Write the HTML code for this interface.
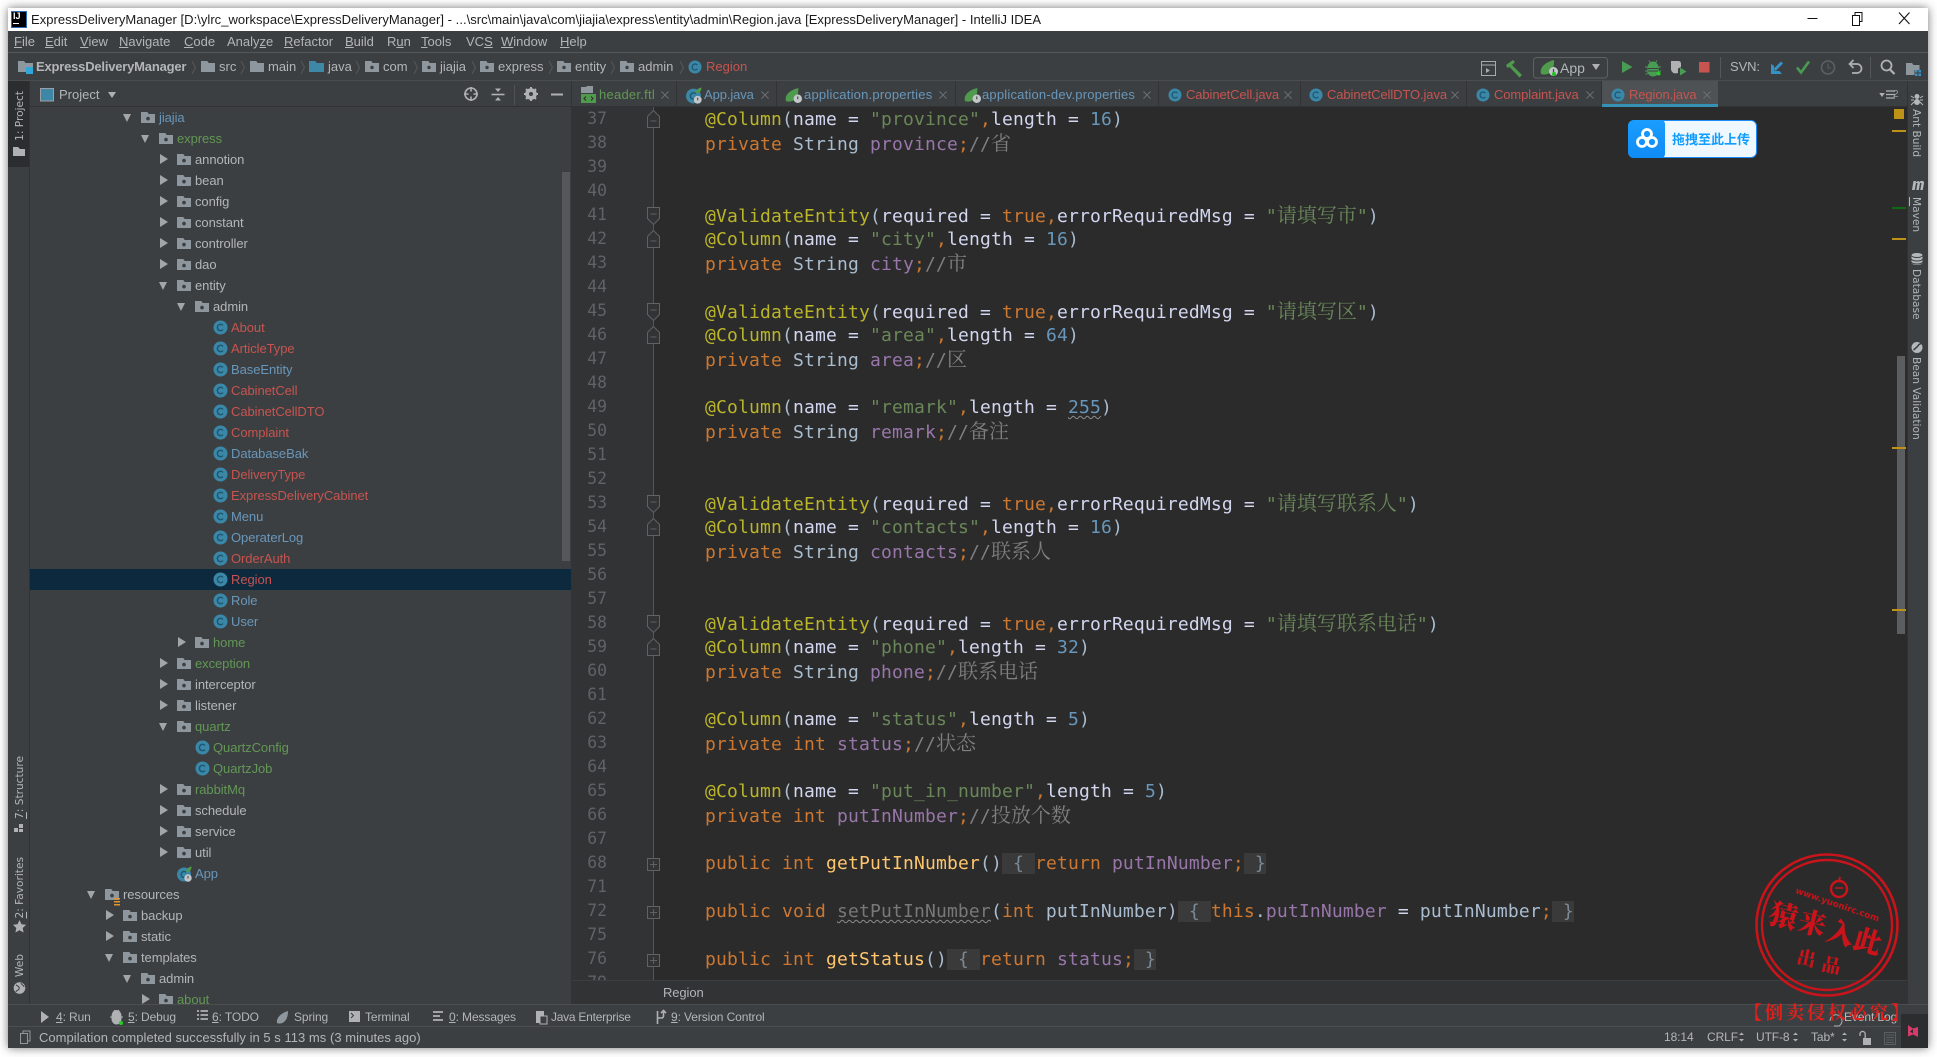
<!DOCTYPE html>
<html lang="zh">
<head>
<meta charset="utf-8">
<title>ExpressDeliveryManager - IntelliJ IDEA</title>
<style>
html,body{margin:0;padding:0;width:1937px;height:1057px;overflow:hidden;background:#fff}
body{position:relative;font-family:"Liberation Sans","Noto Sans CJK SC",sans-serif;font-size:13px;color:#b3b6b9;filter:blur(.3px)}
.w{position:absolute;left:8px;top:8px;width:1920px;height:1040px;background:#3c3f41;box-shadow:0 0 9px rgba(0,0,0,.55)}
.p{position:absolute;white-space:nowrap}
.t{position:absolute;white-space:nowrap;line-height:20px;height:20px}
.box{position:absolute}
u{text-decoration:underline}
/* tree */
#tree{position:absolute;left:30px;top:107px;width:541px;height:897px;overflow:hidden;color:#b3b6b9;letter-spacing:-.07px}
.r{position:relative;height:21px;line-height:21px;padding-left:calc(129px + var(--l)*18px);white-space:nowrap}
.r.sel{background:#0d293e}
.cl::before,.op::before{content:"";position:absolute;width:0;height:0}
.cl::before{left:calc(94px + var(--l)*18px);top:5px;border-left:8px solid #a3a6a9;border-top:5px solid transparent;border-bottom:5px solid transparent}
.op::before{left:calc(93px + var(--l)*18px);top:7px;border-top:8px solid #a3a6a9;border-left:4.5px solid transparent;border-right:4.5px solid transparent}
.fd::after{content:"";position:absolute;left:calc(111px + var(--l)*18px);top:5px;width:14px;height:11px;background:radial-gradient(circle at 50% 60%,#3c3f41 1.5px,#8f979e 2.2px);clip-path:polygon(0 0,45% 0,55% 18%,100% 18%,100% 100%,0 100%)}
.r svg{position:absolute;left:calc(111px + var(--l)*18px);top:3px}
.e{color:#c75450}.b{color:#6897bb}.g{color:#629755}
/* tabs */
.tb{position:absolute;top:85px;line-height:20px;white-space:nowrap;letter-spacing:-.1px}
.sep{position:absolute;top:81px;width:1px;height:26px;background:#323232}
/* code */
#gutter{position:absolute;left:572px;top:107px;width:81px;height:873px;background:#313335;overflow:hidden}
#nums{position:absolute;left:572px;top:107px;width:35px;height:873px;overflow:hidden;text-align:right;font:16.4px/24px "DejaVu Sans Mono",monospace;color:#606366}
#nums div{height:24px}
#code{position:absolute;left:705px;top:108px;width:1190px;height:872px;overflow:hidden;font:18px/24px "DejaVu Sans Mono",monospace;letter-spacing:.16px;color:#a9bcd0}
#code div{height:24px;line-height:24px;white-space:pre}
.an{color:#bbb529}.k{color:#cc7832}.s{color:#6a8759}.n{color:#6897bb}.f{color:#9876aa}.m{color:#d2d6ef}.c{color:#808080}.o{color:#d2d6ef}
.z{font-family:"Noto Serif CJK SC",serif;font-size:20px;letter-spacing:0;line-height:20px}
.ph{background:#3a3a3a;color:#7a8a96}
.wv{text-decoration:underline wavy #8d8d8d 1px;text-underline-offset:2px}
/* stripes */
.vr{position:absolute;writing-mode:vertical-rl;white-space:nowrap;font-family:"DejaVu Sans",sans-serif;font-size:10.6px;color:#b3b6b9;line-height:14px}
.vl{transform:rotate(180deg)}
.bt{position:absolute;top:1007px;line-height:20px;font-size:12px;white-space:nowrap;color:#b3b6b9;letter-spacing:-.1px}
</style>
</head>
<body>
<div class="w"></div>

<!-- title bar -->
<div class="box" style="left:8px;top:8px;width:1920px;height:23px;background:#fff"></div>
<div class="box" style="left:11px;top:11px;width:14px;height:15px;background:#000;border:1px solid #2a6fb5"></div>
<div class="p" style="left:13px;top:11px;font-size:9px;font-weight:bold;color:#fff;line-height:11px">IJ</div>
<div class="box" style="left:13px;top:23px;width:6px;height:1px;background:#fff"></div>
<div class="p" style="left:31px;top:10px;line-height:20px;color:#1a1a1a;font-size:13px;letter-spacing:.03px">ExpressDeliveryManager [D:\ylrc_workspace\ExpressDeliveryManager] - ...\src\main\java\com\jiajia\express\entity\admin\Region.java [ExpressDeliveryManager] - IntelliJ IDEA</div>

<!-- menu -->
<div class="box" style="left:8px;top:52px;width:1920px;height:1px;background:#555759"></div>
<div class="t" style="left:14px;top:32px"><u>F</u>ile</div>
<div class="t" style="left:45px;top:32px"><u>E</u>dit</div>
<div class="t" style="left:80px;top:32px"><u>V</u>iew</div>
<div class="t" style="left:119px;top:32px"><u>N</u>avigate</div>
<div class="t" style="left:184px;top:32px"><u>C</u>ode</div>
<div class="t" style="left:227px;top:32px">Analy<u>z</u>e</div>
<div class="t" style="left:284px;top:32px"><u>R</u>efactor</div>
<div class="t" style="left:345px;top:32px"><u>B</u>uild</div>
<div class="t" style="left:387px;top:32px">R<u>u</u>n</div>
<div class="t" style="left:421px;top:32px"><u>T</u>ools</div>
<div class="t" style="left:466px;top:32px">VC<u>S</u></div>
<div class="t" style="left:501px;top:32px"><u>W</u>indow</div>
<div class="t" style="left:560px;top:32px"><u>H</u>elp</div>

<!-- nav bar -->
<div class="box" style="left:8px;top:80px;width:1920px;height:1px;background:#4a4c4e"></div>
<div class="t" style="left:36px;top:57px;font-weight:bold;letter-spacing:-.2px">ExpressDeliveryManager</div>
<div class="t" style="left:219px;top:57px">src</div>
<div class="t" style="left:268px;top:57px">main</div>
<div class="t" style="left:328px;top:57px">java</div>
<div class="t" style="left:383px;top:57px">com</div>
<div class="t" style="left:440px;top:57px">jiajia</div>
<div class="t" style="left:498px;top:57px">express</div>
<div class="t" style="left:575px;top:57px">entity</div>
<div class="t" style="left:638px;top:57px">admin</div>
<div class="t e" style="left:706px;top:57px">Region</div>
<div class="t" style="left:1560px;top:58px;font-size:14px">App</div>
<div class="t" style="left:1730px;top:57px;letter-spacing:-.1px">SVN:</div>

<!-- left stripe -->
<div class="box" style="left:29px;top:81px;width:1px;height:923px;background:#323232"></div>
<div class="box" style="left:8px;top:81px;width:21px;height:86px;background:#2b2d2f"></div>
<div class="vr vl" style="left:13px;top:91px">1: Project</div>
<div class="vr vl" style="left:13px;top:756px"><u>7</u>: Structure</div>
<div class="vr vl" style="left:13px;top:857px"><u>2</u>: Favorites</div>
<div class="vr vl" style="left:13px;top:954px">Web</div>

<!-- project header -->
<div class="box" style="left:30px;top:106px;width:541px;height:1px;background:#323232"></div>
<div class="t" style="left:59px;top:85px">Project</div>

<!-- tree -->
<div id="tree">
<div class="r op fd b" style="--l:0">jiajia</div>
<div class="r op fd g" style="--l:1">express</div>
<div class="r cl fd" style="--l:2">annotion</div>
<div class="r cl fd" style="--l:2">bean</div>
<div class="r cl fd" style="--l:2">config</div>
<div class="r cl fd" style="--l:2">constant</div>
<div class="r cl fd" style="--l:2">controller</div>
<div class="r cl fd" style="--l:2">dao</div>
<div class="r op fd" style="--l:2">entity</div>
<div class="r op fd" style="--l:3">admin</div>
<div class="r e" style="--l:4"><svg width="15" height="15"><use href="#ci"/></svg>About</div>
<div class="r e" style="--l:4"><svg width="15" height="15"><use href="#ci"/></svg>ArticleType</div>
<div class="r b" style="--l:4"><svg width="15" height="15"><use href="#ci"/></svg>BaseEntity</div>
<div class="r e" style="--l:4"><svg width="15" height="15"><use href="#ci"/></svg>CabinetCell</div>
<div class="r e" style="--l:4"><svg width="15" height="15"><use href="#ci"/></svg>CabinetCellDTO</div>
<div class="r e" style="--l:4"><svg width="15" height="15"><use href="#ci"/></svg>Complaint</div>
<div class="r b" style="--l:4"><svg width="15" height="15"><use href="#ci"/></svg>DatabaseBak</div>
<div class="r e" style="--l:4"><svg width="15" height="15"><use href="#ci"/></svg>DeliveryType</div>
<div class="r e" style="--l:4"><svg width="15" height="15"><use href="#ci"/></svg>ExpressDeliveryCabinet</div>
<div class="r b" style="--l:4"><svg width="15" height="15"><use href="#ci"/></svg>Menu</div>
<div class="r b" style="--l:4"><svg width="15" height="15"><use href="#ci"/></svg>OperaterLog</div>
<div class="r e" style="--l:4"><svg width="15" height="15"><use href="#ci"/></svg>OrderAuth</div>
<div class="r e sel" style="--l:4"><svg width="15" height="15"><use href="#ci"/></svg>Region</div>
<div class="r b" style="--l:4"><svg width="15" height="15"><use href="#ci"/></svg>Role</div>
<div class="r b" style="--l:4"><svg width="15" height="15"><use href="#ci"/></svg>User</div>
<div class="r cl fd g" style="--l:3">home</div>
<div class="r cl fd g" style="--l:2">exception</div>
<div class="r cl fd" style="--l:2">interceptor</div>
<div class="r cl fd" style="--l:2">listener</div>
<div class="r op fd g" style="--l:2">quartz</div>
<div class="r g" style="--l:3"><svg width="15" height="15"><use href="#ci"/></svg>QuartzConfig</div>
<div class="r g" style="--l:3"><svg width="15" height="15"><use href="#ci"/></svg>QuartzJob</div>
<div class="r cl fd g" style="--l:2">rabbitMq</div>
<div class="r cl fd" style="--l:2">schedule</div>
<div class="r cl fd" style="--l:2">service</div>
<div class="r cl fd" style="--l:2">util</div>
<div class="r b" style="--l:2"><svg width="15" height="16"><use href="#sp"/></svg>App</div>
<div class="r op fd" style="--l:-2">resources</div>
<div class="r cl fd" style="--l:-1">backup</div>
<div class="r cl fd" style="--l:-1">static</div>
<div class="r op fd" style="--l:-1">templates</div>
<div class="r op fd" style="--l:0">admin</div>
<div class="r cl fd g" style="--l:1">about</div>
</div>
<div class="box" style="left:562px;top:172px;width:8px;height:389px;background:#55585a"></div>

<!-- tabs -->
<div class="box" style="left:571px;top:81px;width:1336px;height:26px;background:#3c3f41"></div>
<div class="box" style="left:571px;top:81px;width:1px;height:923px;background:#323232"></div>
<div class="box" style="left:572px;top:106px;width:1335px;height:1px;background:#323232"></div>
<div class="box" style="left:1602px;top:81px;width:116px;height:23px;background:#4e5254"></div>
<div class="box" style="left:1602px;top:104px;width:116px;height:3px;background:#3592b5"></div>
<div class="sep" style="left:676px"></div><div class="sep" style="left:776px"></div><div class="sep" style="left:955px"></div><div class="sep" style="left:1158px"></div><div class="sep" style="left:1300px"></div><div class="sep" style="left:1466px"></div><div class="sep" style="left:1601px"></div>
<div class="tb g" style="left:599px;letter-spacing:.25px">header.ftl</div>
<div class="tb b" style="left:704px">App.java</div>
<div class="tb b" style="left:804px;letter-spacing:.22px">application.properties</div>
<div class="tb b" style="left:982px;letter-spacing:.2px">application-dev.properties</div>
<div class="tb e" style="left:1186px">CabinetCell.java</div>
<div class="tb e" style="left:1327px">CabinetCellDTO.java</div>
<div class="tb e" style="left:1494px">Complaint.java</div>
<div class="tb e" style="left:1629px">Region.java</div>
<div class="p" style="left:1893px;top:86px;font-size:10px;line-height:18px;color:#9aa0a5">2</div>

<!-- editor -->
<div class="box" style="left:572px;top:107px;width:1335px;height:873px;background:#2b2b2b"></div>
<div id="gutter"></div>
<div class="box" style="left:653px;top:107px;width:1px;height:873px;background:#555"></div>
<div id="nums">
<div>37</div><div>38</div><div>39</div><div>40</div><div>41</div><div>42</div><div>43</div><div>44</div><div>45</div><div>46</div><div>47</div><div>48</div><div>49</div><div>50</div><div>51</div><div>52</div><div>53</div><div>54</div><div>55</div><div>56</div><div>57</div><div>58</div><div>59</div><div>60</div><div>61</div><div>62</div><div>63</div><div>64</div><div>65</div><div>66</div><div>67</div><div>68</div><div>71</div><div>72</div><div>75</div><div>76</div><div>79</div>
</div>
<div id="code">
<div><span class="an">@Column</span>(<span class="m">name</span> <span class="o">=</span> <span class="s">"province"</span><span class="k">,</span><span class="m">length</span> <span class="o">=</span> <span class="n">16</span>)</div>
<div><span class="k">private</span> String <span class="f">province</span><span class="k">;</span><span class="c">//<span class="z">省</span></span></div>
<div></div>
<div></div>
<div><span class="an">@ValidateEntity</span>(<span class="m">required</span> <span class="o">=</span> <span class="k">true,</span><span class="m">errorRequiredMsg</span> <span class="o">=</span> <span class="s">"<span class="z">请填写市</span>"</span>)</div>
<div><span class="an">@Column</span>(<span class="m">name</span> <span class="o">=</span> <span class="s">"city"</span><span class="k">,</span><span class="m">length</span> <span class="o">=</span> <span class="n">16</span>)</div>
<div><span class="k">private</span> String <span class="f">city</span><span class="k">;</span><span class="c">//<span class="z">市</span></span></div>
<div></div>
<div><span class="an">@ValidateEntity</span>(<span class="m">required</span> <span class="o">=</span> <span class="k">true,</span><span class="m">errorRequiredMsg</span> <span class="o">=</span> <span class="s">"<span class="z">请填写区</span>"</span>)</div>
<div><span class="an">@Column</span>(<span class="m">name</span> <span class="o">=</span> <span class="s">"area"</span><span class="k">,</span><span class="m">length</span> <span class="o">=</span> <span class="n">64</span>)</div>
<div><span class="k">private</span> String <span class="f">area</span><span class="k">;</span><span class="c">//<span class="z">区</span></span></div>
<div></div>
<div><span class="an">@Column</span>(<span class="m">name</span> <span class="o">=</span> <span class="s">"remark"</span><span class="k">,</span><span class="m">length</span> <span class="o">=</span> <span class="n wv">255</span>)</div>
<div><span class="k">private</span> String <span class="f">remark</span><span class="k">;</span><span class="c">//<span class="z">备注</span></span></div>
<div></div>
<div></div>
<div><span class="an">@ValidateEntity</span>(<span class="m">required</span> <span class="o">=</span> <span class="k">true,</span><span class="m">errorRequiredMsg</span> <span class="o">=</span> <span class="s">"<span class="z">请填写联系人</span>"</span>)</div>
<div><span class="an">@Column</span>(<span class="m">name</span> <span class="o">=</span> <span class="s">"contacts"</span><span class="k">,</span><span class="m">length</span> <span class="o">=</span> <span class="n">16</span>)</div>
<div><span class="k">private</span> String <span class="f">contacts</span><span class="k">;</span><span class="c">//<span class="z">联系人</span></span></div>
<div></div>
<div></div>
<div><span class="an">@ValidateEntity</span>(<span class="m">required</span> <span class="o">=</span> <span class="k">true,</span><span class="m">errorRequiredMsg</span> <span class="o">=</span> <span class="s">"<span class="z">请填写联系电话</span>"</span>)</div>
<div><span class="an">@Column</span>(<span class="m">name</span> <span class="o">=</span> <span class="s">"phone"</span><span class="k">,</span><span class="m">length</span> <span class="o">=</span> <span class="n">32</span>)</div>
<div><span class="k">private</span> String <span class="f">phone</span><span class="k">;</span><span class="c">//<span class="z">联系电话</span></span></div>
<div></div>
<div><span class="an">@Column</span>(<span class="m">name</span> <span class="o">=</span> <span class="s">"status"</span><span class="k">,</span><span class="m">length</span> <span class="o">=</span> <span class="n">5</span>)</div>
<div><span class="k">private int</span> <span class="f">status</span><span class="k">;</span><span class="c">//<span class="z">状态</span></span></div>
<div></div>
<div><span class="an">@Column</span>(<span class="m">name</span> <span class="o">=</span> <span class="s">"put_in_number"</span><span class="k">,</span><span class="m">length</span> <span class="o">=</span> <span class="n">5</span>)</div>
<div><span class="k">private int</span> <span class="f">putInNumber</span><span class="k">;</span><span class="c">//<span class="z">投放个数</span></span></div>
<div></div>
<div><span class="k">public int</span> <span style="color:#ffc66d">getPutInNumber</span>()<span class="ph"> { </span><span class="k">return</span> <span class="f">putInNumber</span><span class="k">;</span><span class="ph"> }</span></div>
<div></div>
<div><span class="k">public void</span> <span class="wv" style="color:#787878">setPutInNumber</span>(<span class="k">int</span> putInNumber)<span class="ph"> { </span><span class="k">this</span>.<span class="f">putInNumber</span> <span class="o">=</span> putInNumber<span class="k">;</span><span class="ph"> }</span></div>
<div></div>
<div><span class="k">public int</span> <span style="color:#ffc66d">getStatus</span>()<span class="ph"> { </span><span class="k">return</span> <span class="f">status</span><span class="k">;</span><span class="ph"> }</span></div>
</div>

<!-- baidu widget -->
<div class="box" style="left:1628px;top:120px;width:129px;height:38px;background:#f0f8ff;border-radius:6px;border:1px solid #1b8bf5;box-sizing:border-box"></div>
<div class="box" style="left:1628px;top:120px;width:37px;height:38px;background:linear-gradient(#1a9dff,#0f8bf5);border-radius:6px 4px 4px 6px"></div>
<div class="p" style="left:1672px;top:129px;font-size:13px;line-height:20px;font-weight:bold;color:#0f9dff;font-family:'Noto Sans CJK SC',sans-serif">拖拽至此上传</div>

<!-- right stripe -->
<div class="box" style="left:1907px;top:81px;width:21px;height:923px;background:#3c3f41;border-left:1px solid #323232;box-sizing:border-box"></div>
<div class="box" style="left:1897px;top:356px;width:8px;height:278px;background:#5b5d5f"></div>
<div class="box" style="left:1894px;top:109px;width:10px;height:10px;background:#be9117"></div>
<div class="box" style="left:1892px;top:130px;width:14px;height:2px;background:#be9117"></div>
<div class="box" style="left:1892px;top:207px;width:14px;height:2px;background:#0a6b14"></div>
<div class="box" style="left:1892px;top:238px;width:14px;height:2px;background:#be9117"></div>
<div class="box" style="left:1892px;top:447px;width:14px;height:2px;background:#be9117"></div>
<div class="box" style="left:1892px;top:609px;width:14px;height:2px;background:#be9117"></div>
<div class="vr" style="left:1909px;top:109px">Ant Build</div>
<div class="vr" style="left:1909px;top:197px"><u>M</u>aven</div>
<div class="vr" style="left:1909px;top:269px">Database</div>
<div class="vr" style="left:1909px;top:357px">Bean Validation</div>

<!-- editor breadcrumb -->
<div class="box" style="left:572px;top:980px;width:1335px;height:24px;background:#313335;border-top:1px solid #3c3e40;box-sizing:border-box"></div>
<div class="t" style="left:663px;top:983px;letter-spacing:-.1px">Region</div>

<!-- bottom toolbar -->
<div class="box" style="left:8px;top:1004px;width:1920px;height:1px;background:#4c4e50"></div>
<div class="box" style="left:8px;top:1026px;width:1920px;height:1px;background:#4c4e50"></div>
<div class="bt" style="left:56px"><u>4</u>: Run</div>
<div class="bt" style="left:128px"><u>5</u>: Debug</div>
<div class="bt" style="left:212px"><u>6</u>: TODO</div>
<div class="bt" style="left:294px">Spring</div>
<div class="bt" style="left:365px">Terminal</div>
<div class="bt" style="left:449px"><u>0</u>: Messages</div>
<div class="bt" style="left:551px;letter-spacing:-.25px">Java Enterprise</div>
<div class="bt" style="left:671px"><u>9</u>: Version Control</div>
<div class="t" style="left:39px;top:1028px;letter-spacing:.03px">Compilation completed successfully in 5 s 113 ms (3 minutes ago)</div>
<div class="bt" style="left:1664px;top:1027px">18:14</div>
<div class="bt" style="left:1707px;top:1027px">CRLF</div>
<div class="bt" style="left:1756px;top:1027px">UTF-8</div>
<div class="bt" style="left:1811px;top:1027px">Tab*</div>
<div class="bt" style="left:1844px;color:#bbb">Event Log</div>
<div class="box" style="left:1901px;top:1014px;width:27px;height:34px;background:#2b2d2f"></div>

<!-- icons layer -->
<svg width="1937" height="1057" style="position:absolute;left:0;top:0;pointer-events:none" xmlns="http://www.w3.org/2000/svg">
<defs>
<symbol id="ci" viewBox="0 0 15 15"><circle cx="7.5" cy="7.5" r="7" fill="#3a87a8"/><path d="M10 5.4A3.2 3.2 0 1 0 10 9.6" fill="none" stroke="#1f5570" stroke-width="1.4"/></symbol>
<symbol id="sp" viewBox="0 0 15 16"><circle cx="7" cy="8.5" r="7" fill="#3a87a8"/><path d="M9.2 6.4A3 3 0 1 0 9.2 10.6" fill="none" stroke="#1f5570" stroke-width="1.3"/><path d="M9 5C10 2 12 1 14.5 0.5C14.5 3 13.5 5.5 10.5 6z" fill="#4f9a4c"/><circle cx="11" cy="12" r="3.7" fill="#c4c7ca"/><path d="M11 10v2.5" stroke="#444" stroke-width="1"/></symbol>
<symbol id="lf" viewBox="0 0 19 18"><path d="M1 15C-1 8 6 3 14 1C14.500 8 12 15 5 15.500C3.500 15.500 2 15.500 1 15z" fill="#4f9a4c"/><circle cx="13.500" cy="12.500" r="4.500" fill="#c4c7ca"/><path d="M13.500 10v3" stroke="#444" stroke-width="1.200"/></symbol>
<symbol id="fo" viewBox="0 0 14 11"><path d="M0 0h6.300l1.400 2H14v9H0z" fill="#8f979e"/></symbol>
<symbol id="fd" viewBox="0 0 14 11"><path d="M0 0h6.300l1.400 2H14v9H0z" fill="#8f979e"/><circle cx="7" cy="6.500" r="1.700" fill="#3c3f41"/></symbol>
<symbol id="up" viewBox="0 0 13 18"><path d="M.5 6.500L6.500.5L12.500 6.500V17.500H.5z" fill="#313335" stroke="#606366"/><path d="M3.500 11h6" stroke="#606366"/></symbol>
<symbol id="dn" viewBox="0 0 13 18"><path d="M.5 .5H12.500V11.500L6.500 17.500L.5 11.500z" fill="#313335" stroke="#606366"/><path d="M3.500 7h6" stroke="#606366"/></symbol>
<symbol id="pl" viewBox="0 0 13 13"><path d="M.5 .5h12v12H.5z" fill="#313335" stroke="#606366"/><path d="M3 6.500h7M6.500 3v7" stroke="#606366"/></symbol>
<symbol id="xx" viewBox="0 0 9 9"><path d="M.5 .5L8.500 8.500M8.500 .5L.5 8.500" stroke="#6f7376" stroke-width="1.100"/></symbol>
<symbol id="ar" viewBox="0 0 7 5"><path d="M0 0h7L3.500 5z" fill="#afb1b3"/></symbol>
</defs>

<!-- window buttons -->
<path d="M1807.500 18.500h10" stroke="#111" stroke-width="1"/>
<path d="M1852.500 15.500h7v10h-7zM1855 15.500v-3h7v9h-2.500" fill="none" stroke="#111"/>
<path d="M1899 12.500L1909.500 24M1909.500 12.500L1899 24" stroke="#111" stroke-width="1.100"/>

<!-- nav icons -->
<path d="M18 61h6l1.500 2H33v9H18z" fill="#8f979e"/><rect x="26" y="67" width="7" height="7" fill="#2fa7d9"/>
<path d="M192 61l3.500 6.500L192 74M241 61l3.500 6.500L241 74M301 61l3.500 6.500L301 74M356 61l3.500 6.500L356 74M414 61l3.500 6.500L414 74M472 61l3.500 6.500L472 74M549 61l3.500 6.500L549 74M611 61l3.500 6.500L611 74M680 61l3.500 6.500L680 74" fill="none" stroke="#55585a"/>
<use href="#fo" x="201" y="61" width="14" height="11"/>
<use href="#fo" x="250" y="61" width="14" height="11"/>
<path d="M309 61h6.300l1.400 2H324v9h-15z" fill="#3f87a6"/>
<use href="#fd" x="365" y="61" width="14" height="11"/>
<use href="#fd" x="422" y="61" width="14" height="11"/>
<use href="#fd" x="480" y="61" width="14" height="11"/>
<use href="#fd" x="557" y="61" width="14" height="11"/>
<use href="#fd" x="620" y="61" width="14" height="11"/>
<use href="#ci" x="688" y="60" width="14" height="14"/>

<!-- nav right -->
<path d="M1481.500 61.500h14v14h-14zM1481.500 65h14" fill="none" stroke="#a7aaad"/><path d="M1486 68l4 2.500l-4 2.500z" fill="#a7aaad"/>
<path d="M1506 65l7-5l2 2l-3 3l10 10l-2.500 2.500l-10-10.500l-2 1z" fill="#4f9a4c"/>
<rect x="1533.500" y="57.500" width="74" height="20.500" rx="3" fill="none" stroke="#5e6163"/>
<use href="#lf" x="1540" y="59" width="19" height="18"/><circle cx="1554" cy="74" r="2" fill="#22c322"/>
<path d="M1592 64h8l-4 6z" fill="#afb1b3"/>
<path d="M1622 61l10.500 6l-10.500 6z" fill="#499c54"/>
<path d="M1648 68a5 6 0 0 1 10 0v3a5 5 0 0 1-10 0zM1649 60.500l2 3M1657 60.500l-2 3M1645 67h3M1658 67h3M1645 71h3M1658 71h3M1645.500 74.500l3-2M1660.500 74.500l-3-2" fill="#499c54" stroke="#499c54" stroke-width="1"/><path d="M1648 68.500h10M1648 71h10" stroke="#3c3f41"/><circle cx="1658.500" cy="73.500" r="2" fill="#22d022"/>
<path d="M1671 61h7a2.500 2.500 0 0 1 3 2.500v3.500l-3 1.500v4.500l-3 .5a5 5 0 0 1-4-4z" fill="#afb1b3"/><path d="M1680 67.500l6.500 4l-6.500 4z" fill="#499c54"/>
<rect x="1699" y="62" width="10.500" height="10.500" fill="#c75450"/>
<path d="M1720.500 57v21" stroke="#55585a"/>
<path d="M1782 62.500l-7.500 7.500" stroke="#3592c4" stroke-width="3"/><path d="M1771 64l3 1.800v5.200h5.500l2.500 3h-11z" fill="#3592c4"/>
<path d="M1797 67.500l4 5l8-11" fill="none" stroke="#499c54" stroke-width="2.600"/>
<circle cx="1828" cy="67.500" r="6.500" fill="none" stroke="#5d6062" stroke-width="1.600"/><path d="M1828 63.500v4.500h3" fill="none" stroke="#5d6062"/>
<path d="M1851 64h6a4.500 4.500 0 0 1 0 9h-5" fill="none" stroke="#afb1b3" stroke-width="1.700"/><path d="M1853.500 60l-4 4l4 4" fill="none" stroke="#afb1b3" stroke-width="1.700"/>
<path d="M1870.500 57v21" stroke="#55585a"/>
<circle cx="1886.500" cy="65.500" r="5" fill="none" stroke="#afb1b3" stroke-width="1.800"/><path d="M1890 69.500l4.500 4.500" stroke="#afb1b3" stroke-width="2.200"/>
<path d="M1906 63h6l1.500 2h6v5h-5v5h-8.500z" fill="#8f979e"/><rect x="1915" y="70" width="2.500" height="2.500" fill="#3592c4"/><rect x="1918.500" y="70" width="2.500" height="2.500" fill="#3592c4"/><rect x="1915" y="73.500" width="2.500" height="2.500" fill="#3592c4"/><rect x="1918.500" y="73.500" width="2.500" height="2.500" fill="#3592c4"/>

<!-- project header icons -->
<rect x="40.500" y="88.500" width="13" height="12.500" fill="#3f87a6" stroke="#9aa0a5"/>
<path d="M108 92h8l-4 6z" fill="#afb1b3"/>
<circle cx="471" cy="94" r="6" fill="none" stroke="#afb1b3" stroke-width="1.600"/><path d="M471 87v4.500M471 96.500v4.500M464 94h4.500M473.500 94h4.500" stroke="#afb1b3" stroke-width="1.600"/>
<path d="M491.500 94.500h13" stroke="#afb1b3" stroke-width="1.600"/><path d="M495 88.500h6l-3 3.500zM495 100.500h6l-3-3.500z" fill="#afb1b3"/>
<path d="M514.500 85v20" stroke="#505355"/>
<circle cx="531" cy="94" r="4.300" fill="none" stroke="#afb1b3" stroke-width="3"/><path d="M531 87v14M524 94h14M526 89l10 10M536 89l-10 10" stroke="#afb1b3" stroke-width="2"/><circle cx="531" cy="94" r="2" fill="#3c3f41"/>
<path d="M551 94.500h12" stroke="#afb1b3" stroke-width="2"/>

<!-- left stripe icons -->
<path d="M13 147h5l2 2h5v7H13z" fill="#afb1b3"/>
<path d="M19 824h4v4h-4zM14 828h4v4h-4zM19 829h4v3h-4z" fill="#afb1b3"/>
<path d="M19.500 920l2 4.300l4.600.5l-3.400 3.200l.9 4.500l-4.100-2.300l-4.100 2.300l.9-4.500l-3.400-3.200l4.600-.5z" fill="#afb1b3"/>
<circle cx="19.500" cy="988" r="5.800" fill="#afb1b3"/><path d="M16 985c2 1 4 2 3 4s-3 1-3 3M21 983c0 2 3 2 3 4" fill="none" stroke="#3c3f41"/>

<!-- resources badge -->
<rect x="114" y="898" width="6" height="1.500" fill="#e0962a"/><rect x="114" y="901" width="6" height="1.500" fill="#e0962a"/><rect x="114" y="904" width="6" height="1.500" fill="#e0962a"/>

<!-- tab icons -->
<path d="M581 87h5l1 -1h6v7h-12z" fill="#8f979e"/><rect x="581" y="94" width="15" height="9" fill="#4f9a4c"/><path d="M586 96.500l-2 2l2 2M591 96.500l2 2l-2 2" fill="none" stroke="#2b2b2b"/>
<use href="#sp" x="686" y="87" width="16" height="17"/>
<use href="#lf" x="785" y="87" width="18" height="17"/>
<use href="#lf" x="964" y="87" width="18" height="17"/>
<use href="#ci" x="1168" y="88" width="14" height="14"/>
<use href="#ci" x="1309" y="88" width="14" height="14"/>
<use href="#ci" x="1476" y="88" width="14" height="14"/>
<use href="#ci" x="1611" y="88" width="14" height="14"/>
<use href="#xx" x="661" y="91" width="8" height="8"/>
<use href="#xx" x="761" y="91" width="8" height="8"/>
<use href="#xx" x="939" y="91" width="8" height="8"/>
<use href="#xx" x="1143" y="91" width="8" height="8"/>
<use href="#xx" x="1284" y="91" width="8" height="8"/>
<use href="#xx" x="1451" y="91" width="8" height="8"/>
<use href="#xx" x="1586" y="91" width="8" height="8"/>
<use href="#xx" x="1703" y="91" width="8" height="8"/>
<use href="#ar" x="1879" y="93" width="6" height="4"/>
<path d="M1886 91h9M1886 94.500h9M1886 98h9" stroke="#afb1b3" stroke-width="1.300"/>

<!-- fold markers -->
<use href="#up" x="647" y="110" width="13" height="18"/>
<use href="#dn" x="647" y="207" width="13" height="18"/>
<use href="#up" x="647" y="230" width="13" height="18"/>
<use href="#dn" x="647" y="303" width="13" height="18"/>
<use href="#up" x="647" y="326" width="13" height="18"/>
<use href="#dn" x="647" y="495" width="13" height="18"/>
<use href="#up" x="647" y="518" width="13" height="18"/>
<use href="#dn" x="647" y="615" width="13" height="18"/>
<use href="#up" x="647" y="638" width="13" height="18"/>
<use href="#pl" x="647" y="858" width="13" height="13"/>
<use href="#pl" x="647" y="906" width="13" height="13"/>
<use href="#pl" x="647" y="954" width="13" height="13"/>

<!-- baidu cloud -->
<g fill="none" stroke="#fff" stroke-width="2.800"><circle cx="1647" cy="134" r="4.500"/><circle cx="1642" cy="142" r="4.500"/><circle cx="1652" cy="142" r="4.500"/></g>

<!-- right stripe icons -->
<path d="M1917 94a2.500 2.500 0 0 1 2.500 2.500a2.500 2.500 0 0 1-5 0a2.500 2.500 0 0 1 2.500-2.500zM1917 99a3 3 0 0 1 3 3a3 3 0 0 1-6 0a3 3 0 0 1 3-3z" fill="#b5b8bb"/><path d="M1911 96l3 2M1923 96l-3 2M1911 100h3M1923 100h-3M1911 105l3-3M1923 105l-3-3" stroke="#b5b8bb"/>
<path d="M1912 190l1.500-9h2.500l-.4 2c1-1.800 3-2.500 4-1c1-1.500 4-1.500 4.500 .5l-1.300 7.500h-2.500l1.200-7h-1.500l-1.200 7h-2.500l1.200-7h-1.500l-1.300 7z" fill="#b5b8bb"/>
<ellipse cx="1917" cy="255" rx="5.500" ry="2" fill="#b5b8bb"/><path d="M1911.500 256v7a5.500 2 0 0 0 11 0v-7a5.500 2 0 0 1-11 0z" fill="#b5b8bb"/><path d="M1911.500 259a5.500 2 0 0 0 11 0M1911.500 262a5.500 2 0 0 0 11 0" fill="none" stroke="#3c3f41"/>
<circle cx="1917" cy="347.500" r="5.500" fill="#b5b8bb"/><path d="M1913.500 350l3.500-3l2-2.500l3-1.500" fill="none" stroke="#3c3f41" stroke-width="1.500"/>

<!-- bottom icons -->
<path d="M41 1011l8 6l-8 6z" fill="#afb1b3"/>
<path d="M112 1016a4.500 5.500 0 0 1 9 0v3a4.500 5 0 0 1-9 0zM114 1010l1.500 2.500M119 1010l-1.500 2.500M110 1017h3M120 1017h3" fill="#afb1b3" stroke="#afb1b3"/><circle cx="121" cy="1023" r="2" fill="#22d022"/>
<path d="M197 1011h2M197 1015h2M197 1019h2M200.500 1011h7.500M200.500 1015h7.500M200.500 1019h7.500" stroke="#afb1b3" stroke-width="1.800"/>
<path d="M277 1023c-1-5 4-10 11-12c0 6-2 12-8 12.500c-1 0-2 0-3-.5z" fill="#8f979e"/>
<rect x="349" y="1011" width="11" height="11" fill="#afb1b3"/><path d="M351 1013l2.500 2.500l-2.500 2.500" fill="none" stroke="#3c3f41"/>
<path d="M433 1012h10M433 1016h7M433 1020h10" stroke="#afb1b3" stroke-width="1.800"/>
<rect x="536" y="1011" width="8" height="12" fill="#afb1b3"/><rect x="540" y="1016" width="7" height="8" fill="#3c3f41" stroke="#afb1b3"/>
<path d="M657.500 1011v13M657.500 1018h4a2 2 0 0 0 2-2v-4M661 1013l2.500-2.500l2.500 2.500" fill="none" stroke="#afb1b3" stroke-width="1.600"/>
<path d="M20.500 1033.500h7v10h-7z" fill="none" stroke="#8f979e"/><path d="M23 1033v-2h7v10h-2.500" fill="none" stroke="#8f979e"/>
<path d="M1739 1035l2.500-2.500l2.500 2.500zM1739 1039l2.500 2.500l2.500-2.500zM1793 1035l2.500-2.500l2.500 2.500zM1793 1039l2.500 2.500l2.500-2.500zM1842 1035l2.500-2.500l2.500 2.500zM1842 1039l2.500 2.500l2.500-2.500z" fill="#afb1b3"/>
<rect x="1863" y="1038" width="8" height="7" fill="#afb1b3"/><path d="M1860 1036v-2a2.600 2.600 0 0 1 5.200 0v4" fill="none" stroke="#afb1b3" stroke-width="1.300"/>
<path d="M1884.500 1032.500h11v12h-11zM1886 1035h8M1886 1037.500h8M1886 1040h8M1886 1042.500h8" fill="none" stroke="#5c5f61"/>
<path d="M1908 1025l5 3.500l5-1.500v10l-5-2.500l-5 2z" fill="#d83a6a"/><path d="M1913 1029l-3 2.500l3 2z" fill="#2b2d2f"/>
<path d="M1830 1021a6 6 0 1 1 9 5h-5" fill="none" stroke="#afb1b3"/>

<!-- stamp -->
<g fill="none" stroke="#c8141a"><circle cx="1827" cy="925" r="70.500" stroke-width="2.600"/><circle cx="1827" cy="925" r="65" stroke-width="2.400"/></g>
<g fill="#c8141a" font-family="'Noto Serif CJK SC',serif" font-weight="900">
<text font-size="29" text-anchor="middle" transform="translate(1781 926) rotate(14)">猿</text>
<text font-size="28" text-anchor="middle" transform="translate(1810 933) rotate(14)">来</text>
<text font-size="28" text-anchor="middle" transform="translate(1838 943) rotate(16)">入</text>
<text font-size="28" text-anchor="middle" transform="translate(1865 951) rotate(16)">此</text>
<text font-size="19" text-anchor="middle" transform="translate(1805 965) rotate(12)">出</text>
<text font-size="19" text-anchor="middle" transform="translate(1830 972) rotate(12)">品</text>
</g>
<text x="0" y="0" fill="#c8141a" font-size="8.800" font-family="'DejaVu Sans',sans-serif" font-weight="bold" transform="translate(1795 893) rotate(19)">www.yuonirc.com</text>
<circle cx="1839" cy="889" r="8" fill="none" stroke="#c8141a" stroke-width="2.500"/><path d="M1839 881l1-4" stroke="#c8141a" stroke-width="2"/><path d="M1835 888h8" stroke="#c8141a" stroke-width="1.500"/>
<text x="1744" y="1019" fill="#e0201c" font-size="18" letter-spacing="3" font-family="'Noto Serif CJK SC',serif" font-weight="700">【倒卖侵权必究】</text>
</svg>
</body>
</html>
